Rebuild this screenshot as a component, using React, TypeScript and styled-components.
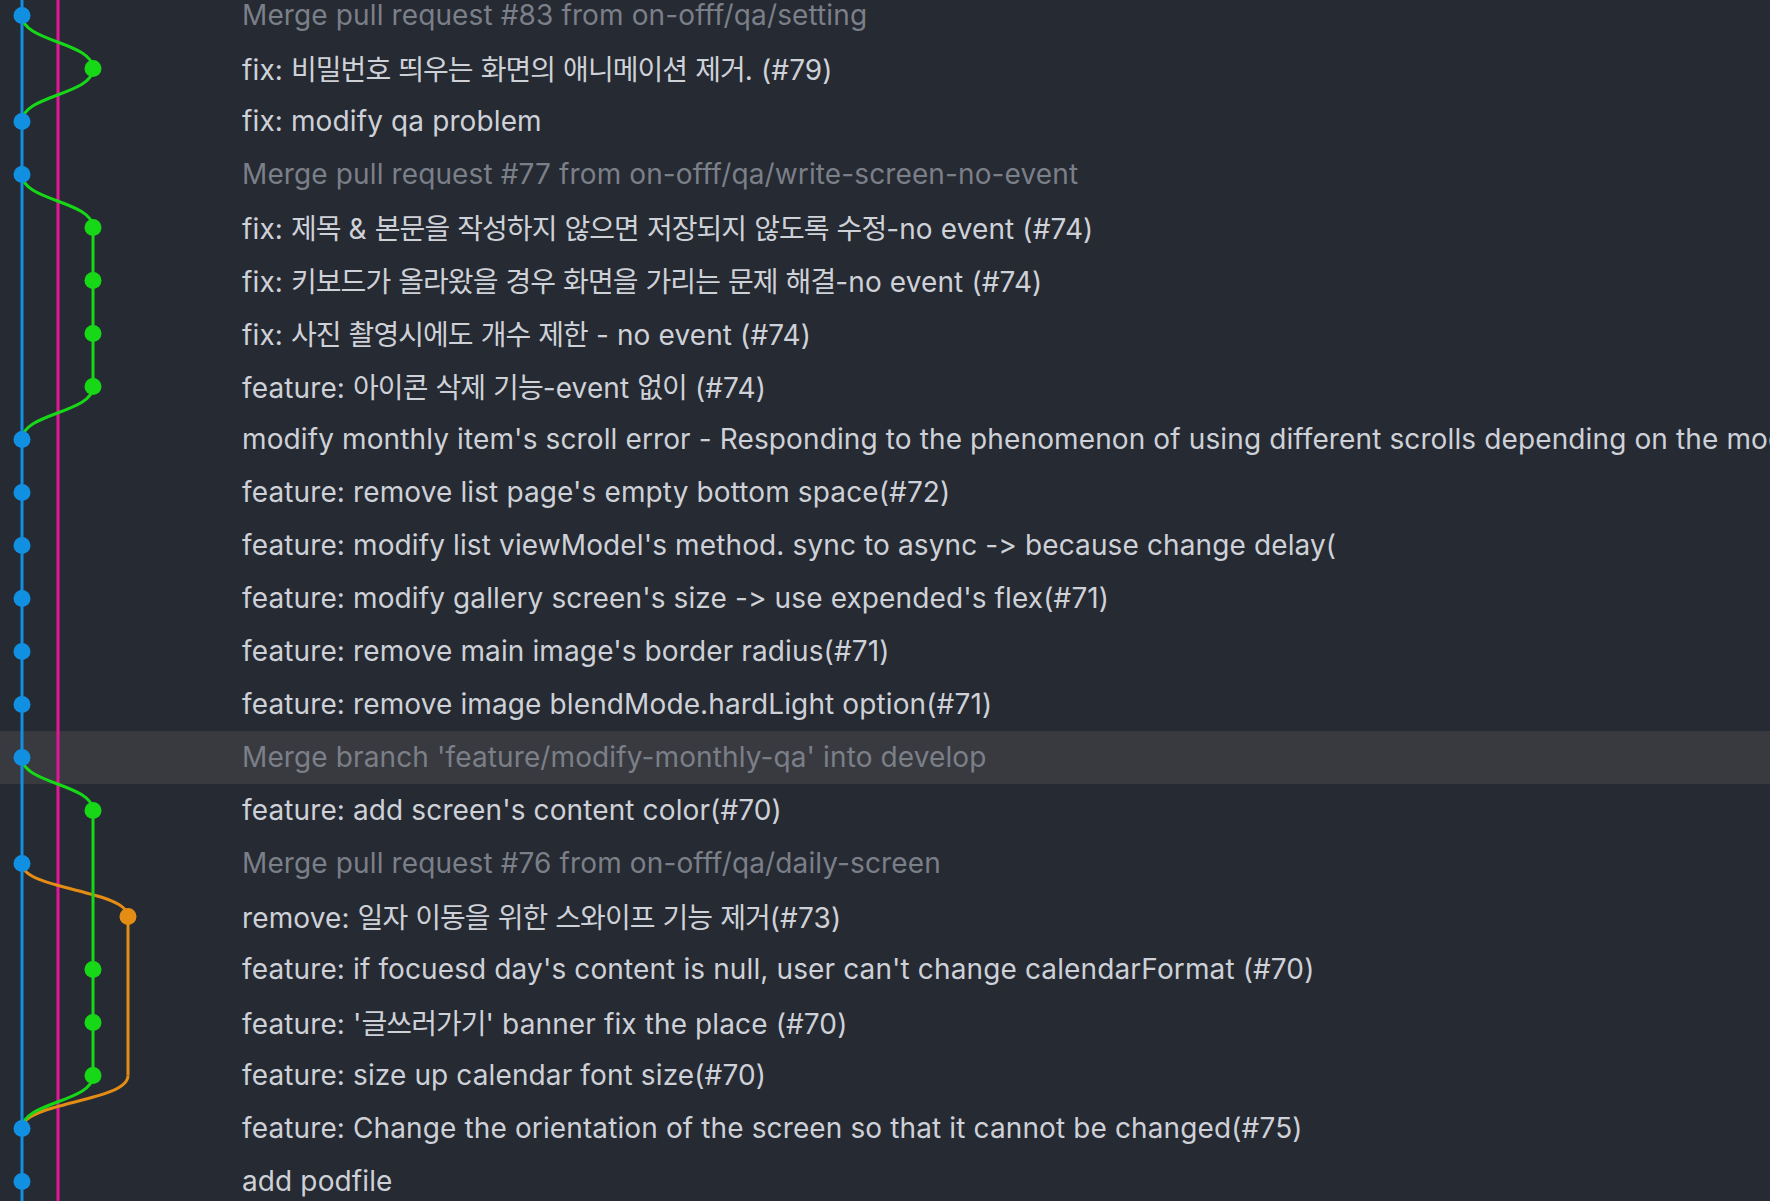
import React from "react";
import styled, { createGlobalStyle } from "styled-components";

const ROW = 53;
const LANE = [22, 58, 93, 128];
const COLORS = {
  blue: "#1190e2",
  pink: "#e6149a",
  green: "#17d817",
  orange: "#e38d14",
};

type Lane = 0 | 2 | 3;

interface Commit {
  msg: string;
  lane: Lane;
  merge?: boolean;
  selected?: boolean;
}

const commits: Commit[] = [
  { msg: "Merge pull request #83 from on-offf/qa/setting", lane: 0, merge: true },
  { msg: "fix: 비밀번호 띄우는 화면의 애니메이션 제거. (#79)", lane: 2 },
  { msg: "fix: modify qa problem", lane: 0 },
  { msg: "Merge pull request #77 from on-offf/qa/write-screen-no-event", lane: 0, merge: true },
  { msg: "fix: 제목 & 본문을 작성하지 않으면 저장되지 않도록 수정-no event (#74)", lane: 2 },
  { msg: "fix: 키보드가 올라왔을 경우 화면을 가리는 문제 해결-no event (#74)", lane: 2 },
  { msg: "fix: 사진 촬영시에도 개수 제한 - no event (#74)", lane: 2 },
  { msg: "feature: 아이콘 삭제 기능-event 없이 (#74)", lane: 2 },
  {
    msg: "modify monthly item's scroll error - Responding to the phenomenon of using different scrolls depending on the mode",
    lane: 0,
  },
  { msg: "feature: remove list page's empty bottom space(#72)", lane: 0 },
  { msg: "feature: modify list viewModel's method. sync to async -> because change delay(", lane: 0 },
  { msg: "feature: modify gallery screen's size -> use expended's flex(#71)", lane: 0 },
  { msg: "feature: remove main image's border radius(#71)", lane: 0 },
  { msg: "feature: remove image blendMode.hardLight option(#71)", lane: 0 },
  { msg: "Merge branch 'feature/modify-monthly-qa' into develop", lane: 0, merge: true, selected: true },
  { msg: "feature: add screen's content color(#70)", lane: 2 },
  { msg: "Merge pull request #76 from on-offf/qa/daily-screen", lane: 0, merge: true },
  { msg: "remove: 일자 이동을 위한 스와이프 기능 제거(#73)", lane: 3 },
  { msg: "feature: if focuesd day's content is null, user can't change calendarFormat (#70)", lane: 2 },
  { msg: "feature: '글쓰러가기' banner fix the place (#70)", lane: 2 },
  { msg: "feature: size up calendar font size(#70)", lane: 2 },
  { msg: "feature: Change the orientation of the screen so that it cannot be changed(#75)", lane: 0 },
  { msg: "add podfile", lane: 0 },
];

const laneColor = (lane: Lane) =>
  lane === 0 ? COLORS.blue : lane === 2 ? COLORS.green : COLORS.orange;

const cy = (i: number) => ROW / 2 + ROW * i;

const sCurve = (x1: number, r1: number, x2: number, r2: number) => {
  const y1 = cy(r1);
  const y2 = cy(r2);
  const ym = (y1 + y2) / 2;
  return `M${x1} ${y1} C${x1} ${ym}, ${x2} ${ym}, ${x2} ${y2}`;
};

const vLine = (x: number, r1: number, r2: number) => `M${x} ${cy(r1)} L${x} ${cy(r2)}`;

const GlobalStyle = createGlobalStyle`
  html, body {
    margin: 0;
    padding: 0;
    background: #262a33;
    overflow: hidden;
  }
`;

const Viewport = styled.div`
  width: 1770px;
  height: 1201px;
  overflow: hidden;
  background: #262a33;
  font-family: Inter, "Noto Sans CJK KR", sans-serif;
`;

const Table = styled.div`
  position: relative;
  margin-top: -11.5px;
  display: flex;
  flex-direction: column;
`;

const GraphLayer = styled.svg`
  position: absolute;
  top: 0;
  left: 0;
  overflow: visible;
  pointer-events: none;
`;

const Row = styled.div<{ $selected?: boolean }>`
  display: flex;
  align-items: center;
  height: ${ROW}px;
  padding-left: 242px;
  box-sizing: border-box;
  background: ${(p) => (p.$selected ? "#393a40" : "transparent")};
  white-space: nowrap;
  overflow: hidden;
`;

const Message = styled.span<{ $merge?: boolean }>`
  font-size: 28px;
  letter-spacing: 0.12px;
  color: ${(p) => (p.$merge ? "#7b7f88" : "#ced1d7")};
`;

const Hangul = styled.span`
  font-family: "Noto Sans CJK KR", sans-serif;
  letter-spacing: -0.95px;
`;

const HANGUL_RE = /([\u3131-\u318E\uAC00-\uD7A3]+)/;

const renderMessage = (msg: string) =>
  msg.split(HANGUL_RE).map((part, i) =>
    i % 2 === 1 ? <Hangul key={i}>{part}</Hangul> : <React.Fragment key={i}>{part}</React.Fragment>
  );

const Graph: React.FC = () => {
  const height = commits.length * ROW + 40;
  const stroke = 3;
  const green = [
    sCurve(LANE[0], 0, LANE[2], 1),
    sCurve(LANE[2], 1, LANE[0], 2),
    sCurve(LANE[0], 3, LANE[2], 4),
    vLine(LANE[2], 4, 7),
    sCurve(LANE[2], 7, LANE[0], 8),
    sCurve(LANE[0], 14, LANE[2], 15),
    vLine(LANE[2], 15, 20),
    sCurve(LANE[2], 20, LANE[0], 21),
  ];
  const orange = [
    sCurve(LANE[0], 16, LANE[3], 17),
    vLine(LANE[3], 17, 20),
    sCurve(LANE[3], 20, LANE[0], 21),
  ];
  return (
    <GraphLayer width={240} height={height} viewBox={`0 0 240 ${height}`}>
      <line x1={LANE[1]} y1={-20} x2={LANE[1]} y2={height} stroke={COLORS.pink} strokeWidth={stroke} />
      <line x1={LANE[0]} y1={-20} x2={LANE[0]} y2={height} stroke={COLORS.blue} strokeWidth={stroke} />
      {orange.map((d, i) => (
        <path key={`o${i}`} d={d} fill="none" stroke={COLORS.orange} strokeWidth={stroke} />
      ))}
      {green.map((d, i) => (
        <path key={`g${i}`} d={d} fill="none" stroke={COLORS.green} strokeWidth={stroke} />
      ))}
      {commits.map((c, i) => (
        <circle key={`c${i}`} cx={LANE[c.lane]} cy={cy(i)} r={8.5} fill={laneColor(c.lane)} />
      ))}
    </GraphLayer>
  );
};

export default function App() {
  return (
    <Viewport>
      <GlobalStyle />
      <Table>
        {commits.map((c, i) => (
          <Row key={i} $selected={c.selected}>
            <Message $merge={c.merge}>{renderMessage(c.msg)}</Message>
          </Row>
        ))}
        <Graph />
      </Table>
    </Viewport>
  );
}
